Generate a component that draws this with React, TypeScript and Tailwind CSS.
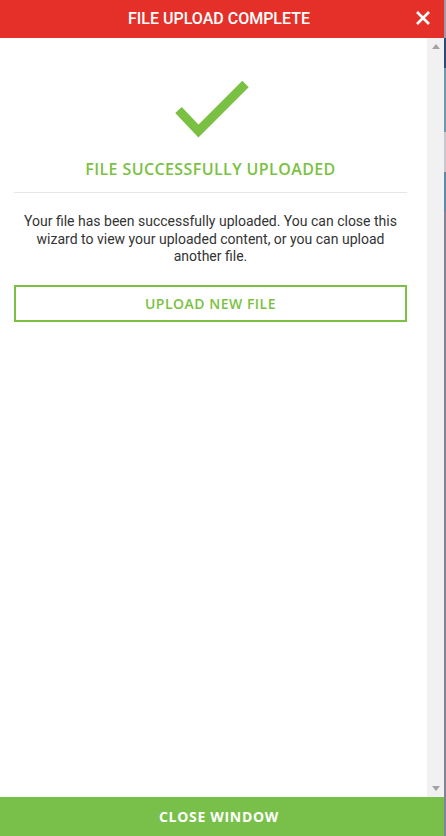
export default function App() {
  return (
    <div className="flex h-[836px] w-[446px] overflow-hidden bg-white">
      <div className="flex w-[444px] flex-col">
        <header className="relative flex h-[38px] shrink-0 items-center justify-center bg-[#e5302a] pr-[6px]">
          <h1 className="font-['Roboto',sans-serif] text-[16px] font-medium text-white">
            FILE UPLOAD COMPLETE
          </h1>
          <button className="absolute right-[13px] top-[10px] text-white">
            <svg width="16" height="16" viewBox="0 0 16 16">
              <path d="M2 2 L14 14 M14 2 L2 14" stroke="currentColor" strokeWidth="2.6" />
            </svg>
          </button>
        </header>

        <div className="flex flex-1">
          <div className="flex-1 px-[14px] pr-[20px]">
            <div className="flex flex-col items-center">
              <svg className="mt-[38px]" width="80" height="64" viewBox="0 0 80 64">
                <polyline
                  points="7.5,34 27.5,55 74.5,8"
                  fill="none"
                  stroke="#7ac143"
                  strokeWidth="9"
                  strokeLinejoin="miter"
                />
              </svg>
              <h2 className="mt-[19px] font-['Open_Sans',sans-serif] text-[16px] font-semibold leading-[20px] tracking-[0.4px] text-[#7ac143]">
                FILE SUCCESSFULLY UPLOADED
              </h2>
            </div>
            <div className="mt-[13px] h-px bg-[#e6e6e6]" />
            <p className="mt-[20px] px-[8px] text-center font-['Roboto',sans-serif] text-[14px] leading-[17.5px] text-[#333333]">
              Your file has been successfully uploaded. You can close this wizard to view your uploaded content, or you can upload another file.
            </p>
            <button className="mt-[19px] flex h-[37px] w-full items-center justify-center border-2 border-[#7ac143] font-['Open_Sans',sans-serif] text-[14px] font-semibold tracking-[0.5px] text-[#7ac143]">
              UPLOAD NEW FILE
            </button>
          </div>
          <div className="flex w-[17px] flex-col items-center justify-between bg-[#f1f1f1] py-[6px]">
            <svg width="8" height="5" viewBox="0 0 8 5">
              <polygon points="0,5 4,0 8,5" fill="#a3a3a3" />
            </svg>
            <svg width="8" height="5" viewBox="0 0 8 5">
              <polygon points="0,0 8,0 4,5" fill="#a3a3a3" />
            </svg>
          </div>
        </div>

        <footer className="flex h-[39px] shrink-0 items-center justify-center bg-[#79c04a] pr-[6px]">
          <span className="font-['Open_Sans',sans-serif] text-[14px] font-bold tracking-[0.7px] text-white">
            CLOSE WINDOW
          </span>
        </footer>
      </div>
      <div className="flex w-[2px] flex-col bg-[#80839a]">
        <div className="h-[38px] bg-[#9a9aa8]" />
        <div className="h-[30px] bg-[#2c4a78]" />
        <div className="h-[64px] bg-[#6e98b0]" />
        <div className="h-[40px] bg-[#c8c8cc]" />
        <div className="h-[40px] bg-[#5c8aa8]" />
      </div>
    </div>
  );
}
